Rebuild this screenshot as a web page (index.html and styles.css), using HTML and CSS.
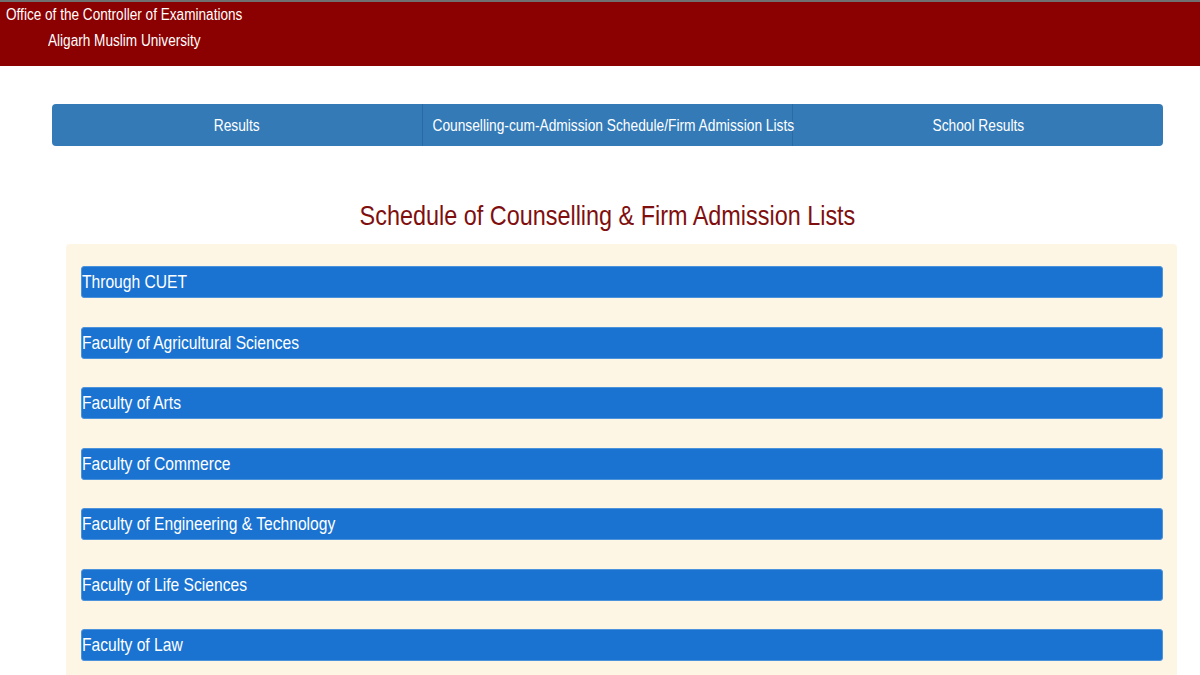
FILE: index.html
```html
<!DOCTYPE html>
<html>
<head>
<meta charset="utf-8">
<link rel="stylesheet" href="styles.css">
</head>
<body>
<header class="top">
  <div class="top-line1"><span class="sq-left">Office of the Controller of Examinations</span></div>
  <div class="top-line2"><span class="sq-left">Aligarh Muslim University</span></div>
</header>
<nav class="nav">
  <a class="nav-item"><span class="sq-mid">Results</span></a>
  <a class="nav-item"><span class="sq-mid nav-mid-text">Counselling-cum-Admission Schedule/Firm Admission Lists</span></a>
  <a class="nav-item"><span class="sq-mid">School Results</span></a>
</nav>
<h1 class="title"><span class="sq-mid sq-title">Schedule of Counselling &amp; Firm Admission Lists</span></h1>
<section class="panel">
  <div class="bar"><span class="sq-left sq-bar">Through CUET</span></div>
  <div class="bar"><span class="sq-left sq-bar">Faculty of Agricultural Sciences</span></div>
  <div class="bar"><span class="sq-left sq-bar">Faculty of Arts</span></div>
  <div class="bar"><span class="sq-left sq-bar">Faculty of Commerce</span></div>
  <div class="bar"><span class="sq-left sq-bar">Faculty of Engineering &amp; Technology</span></div>
  <div class="bar"><span class="sq-left sq-bar">Faculty of Life Sciences</span></div>
  <div class="bar"><span class="sq-left sq-bar">Faculty of Law</span></div>
</section>
</body>
</html>
```
FILE: styles.css
```css
html, body {
  margin: 0;
  padding: 0;
  background: #ffffff;
  font-family: "Liberation Sans", Arial, sans-serif;
  overflow: hidden;
}
.sq-left {
  display: inline-block;
  white-space: nowrap;
  transform: scaleX(0.85);
  transform-origin: left center;
}
.sq-mid {
  display: inline-block;
  white-space: nowrap;
  transform: scaleX(0.86);
  transform-origin: center center;
}
.sq-title {
  transform: scaleX(0.836);
}
.sq-bar {
  transform: scaleX(0.822);
}
.top {
  border-top: 2px solid #707070;
  background: #8b0000;
  color: #ffffff;
  height: 66px;
  box-sizing: border-box;
  padding: 4px 0 0 6px;
  font-size: 16px;
  line-height: 18px;
}
.top-line2 {
  margin-top: 8px;
  padding-left: 42px;
}
.nav {
  display: flex;
  margin: 38px 0 0 52px;
  width: 1111px;
  height: 42px;
  background: #337ab7;
  border-radius: 4px;
}
.nav-item {
  flex: 1 1 0;
  min-width: 0;
  display: flex;
  align-items: center;
  justify-content: center;
  color: #ffffff;
  font-size: 16px;
  line-height: 20px;
  padding-top: 2px;
  box-sizing: border-box;
  border-left: 1px solid #2b6aa3;
}
.nav-item:first-child {
  border-left: none;
}
.nav-mid-text {
  margin-left: 12px;
}
.title {
  margin: 54px 0 0 0;
  text-align: center;
  font-weight: normal;
  font-size: 28px;
  line-height: 32px;
  color: #7f0f0f;
  padding-left: 14px;
}
.panel {
  margin: 12px 0 0 66px;
  width: 1111px;
  box-sizing: border-box;
  background: #fdf6e4;
  border-radius: 4px;
  padding: 22px 14px 20px 15px;
  display: flex;
  flex-direction: column;
  gap: 28.5px;
}
.bar {
  height: 32px;
  box-sizing: border-box;
  background: #1a73d1;
  border: 1px solid #4d93dc;
  border-radius: 3px;
  color: #ffffff;
  font-size: 19px;
  line-height: 29px;
  padding-left: 0;
}
```
